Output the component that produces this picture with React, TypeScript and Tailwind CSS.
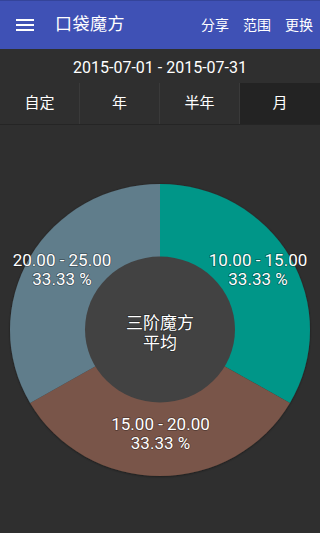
import React from "react";

const cjk = '"Roboto", "Noto Sans CJK SC", sans-serif';

export default function App() {
  const tabs = ["自定", "年", "半年", "月"];
  const labelStyle: React.CSSProperties = {
    fontFamily: cjk,
    fontSize: 17,
    fill: "#ffffff",
    paintOrder: "stroke",
  };
  return (
    <div className="w-[320px] h-[533px] overflow-hidden bg-[#2f2f2f] flex flex-col" style={{ fontFamily: cjk }}>
      <div className="h-[49px] bg-[#3f51b5] border-t border-[#34449a] flex items-center text-white shrink-0">
        <div className="w-[18px] ml-[16px] flex flex-col gap-[3px]">
          <div className="h-[2px] bg-white" />
          <div className="h-[2px] bg-white" />
          <div className="h-[2px] bg-white" />
        </div>
        <div className="ml-[21px] text-[17px] tracking-[0.5px]">口袋魔方</div>
        <div className="ml-auto mr-[7px] flex gap-[14px] text-[14px]">
          <span>分享</span>
          <span>范围</span>
          <span>更换</span>
        </div>
      </div>
      <div className="h-[34px] pt-[4px] flex items-center justify-center text-white text-[16px] shrink-0">
        2015-07-01 - 2015-07-31
      </div>
      <div className="h-[42px] grid grid-cols-4 border-b border-[#252525] shrink-0">
        {tabs.map((t, i) => (
          <div
            key={t}
            className={
              i === 3
                ? "flex items-center justify-center text-white text-[15px] bg-[#232323]"
                : "flex items-center justify-center text-white text-[15px] border-r border-[#3a3a3a]"
            }
          >
            {t}
          </div>
        ))}
      </div>
      <svg width="320" height="408" viewBox="0 0 320 408" className="shrink-0">
        <defs>
          <filter id="sh" x="-10%" y="-10%" width="120%" height="120%">
            <feDropShadow dx="0" dy="0.5" stdDeviation="1" floodColor="#000" floodOpacity="0.5" />
          </filter>
        </defs>
        <g filter="url(#sh)">
          <path d="M160 205 L160 59 A150 146 0 0 1 289.9 278 Z" fill="#009688" />
          <path d="M160 205 L289.9 278 A150 146 0 0 1 30.1 278 Z" fill="#795548" />
          <path d="M160 205 L30.1 278 A150 146 0 0 1 160 59 Z" fill="#607d8b" />
        </g>
        <ellipse cx="160" cy="204.5" rx="75" ry="73" fill="#424242" />
        <g style={labelStyle} stroke="rgba(0,0,0,0.35)" strokeWidth="1.5" textAnchor="middle" dominantBaseline="central">
          <text x="62" y="135">20.00 - 25.00</text>
          <text x="62" y="154">33.33 %</text>
          <text x="258" y="135">10.00 - 15.00</text>
          <text x="258" y="154">33.33 %</text>
          <text x="160.5" y="299">15.00 - 20.00</text>
          <text x="160.5" y="318">33.33 %</text>
          <text x="160" y="198">三阶魔方</text>
          <text x="160" y="218">平均</text>
        </g>
      </svg>
    </div>
  );
}
